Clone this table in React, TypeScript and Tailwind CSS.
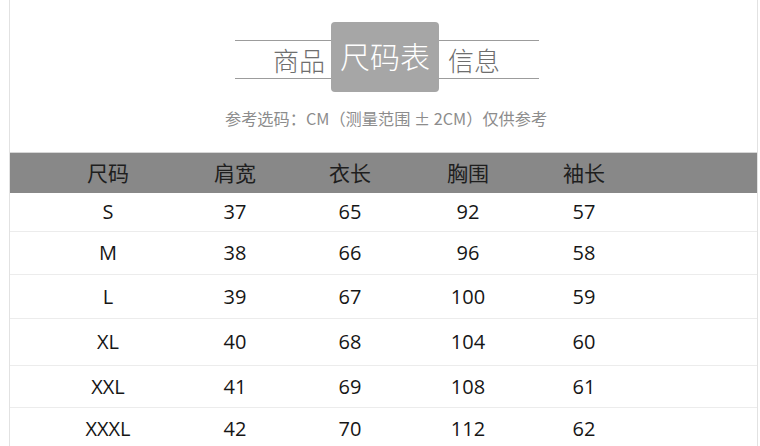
import React from "react";

const rows = [
  { h: "h-[39px]", cells: ["S", "37", "65", "92", "57"] },
  { h: "h-[43px]", cells: ["M", "38", "66", "96", "58"] },
  { h: "h-[44px]", cells: ["L", "39", "67", "100", "59"] },
  { h: "h-[47px]", cells: ["XL", "40", "68", "104", "60"] },
  { h: "h-[42px]", cells: ["XXL", "41", "69", "108", "61"] },
  { h: "h-[43px]", cells: ["XXXL", "42", "70", "112", "62"] },
];

const heads = ["尺码", "肩宽", "衣长", "胸围", "袖长"];

// column widths chosen so each cell's centre lines up with the picture
const cols = "grid grid-cols-[116px_138px_92px_144px_88px] pl-[40px]";

const App = () => {
  return (
    <div className="w-[760px] h-[446px] overflow-hidden bg-white">
      <div className="ml-[9px] w-[749px] h-full border-x border-[#e2e2e2] font-['Noto_Sans_CJK_SC',sans-serif]">
        {/* TITLE */}
        <div className="h-[152px]">
          <div className="flex items-start pl-[225px] pt-[22px]">
            <div className="mt-[18px] flex h-[39px] w-[96px] items-center justify-end border-y border-[#9c9c9c] pr-[6px] text-[26px] font-light leading-none text-[#6e6e6e]">
              商品
            </div>
            <div className="flex h-[70px] w-[108px] items-center justify-center rounded-[4px] bg-[#a6a6a6] pb-[5px] text-[30px] font-light leading-none text-white">
              尺码表
            </div>
            <div className="mt-[18px] flex h-[39px] w-[100px] items-center border-y border-[#9c9c9c] pl-[9px] text-[26px] font-light leading-none text-[#6e6e6e]">
              信息
            </div>
          </div>
          <div className="mt-[14px] pl-[215px] text-[16.2px] leading-[24px] text-[#8c8c8c]">
            参考选码：CM（测量范围 ± 2CM）仅供参考
          </div>
        </div>

        {/* TABLE */}
        <div className="font-['Open_Sans','Noto_Sans_CJK_SC',sans-serif]">
          <div className={`${cols} h-[41px] items-center border-t border-[#d6d6d6] bg-[#888888] text-[21px] text-[#1e1e1e]`}>
            {heads.map((h) => (
              <div key={h} className="text-center font-['Noto_Sans_CJK_SC',sans-serif]">
                {h}
              </div>
            ))}
          </div>
          {rows.map((r) => (
            <div
              key={r.cells[0]}
              className={`${cols} ${r.h} items-center border-b border-[#ececec] text-[20px] text-[#161616]`}
            >
              {r.cells.map((c, i) => (
                <div key={i} className="text-center">
                  {c}
                </div>
              ))}
            </div>
          ))}
        </div>
      </div>
    </div>
  );
};

export default App;
